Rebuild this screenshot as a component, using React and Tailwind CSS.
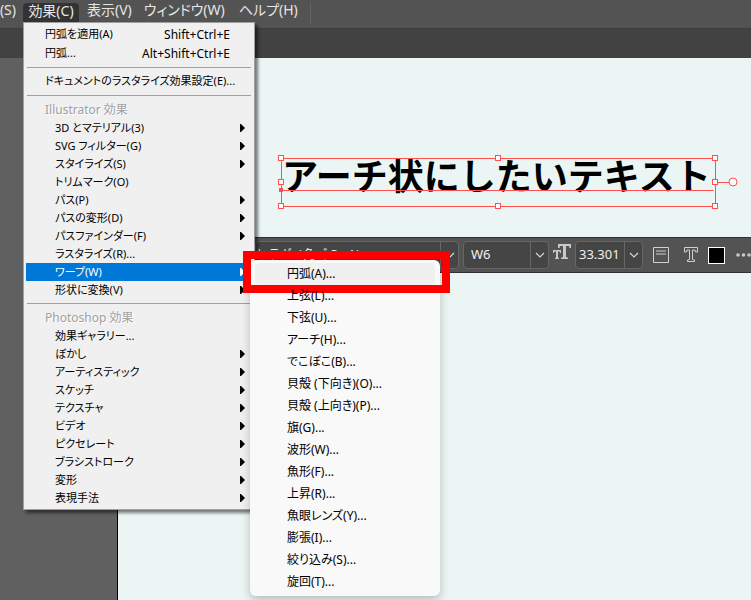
import React from "react";

const EFFECT_MENU = [
  { label: "円弧を適用(A)", shortcut: "Shift+Ctrl+E" },
  { label: "円弧...", shortcut: "Alt+Shift+Ctrl+E" },
  { separator: true },
  { label: "ドキュメントのラスタライズ効果設定(E)..." },
  { separator: true },
  { heading: "Illustrator 効果" },
  { label: "3D とマテリアル(3)", indent: true, arrow: true },
  { label: "SVG フィルター(G)", indent: true, arrow: true },
  { label: "スタイライズ(S)", indent: true, arrow: true },
  { label: "トリムマーク(O)", indent: true },
  { label: "パス(P)", indent: true, arrow: true },
  { label: "パスの変形(D)", indent: true, arrow: true },
  { label: "パスファインダー(F)", indent: true, arrow: true },
  { label: "ラスタライズ(R)...", indent: true },
  { label: "ワープ(W)", indent: true, arrow: true, active: true },
  { label: "形状に変換(V)", indent: true, arrow: true },
  { separator: true },
  { heading: "Photoshop 効果" },
  { label: "効果ギャラリー...", indent: true },
  { label: "ぼかし", indent: true, arrow: true },
  { label: "アーティスティック", indent: true, arrow: true },
  { label: "スケッチ", indent: true, arrow: true },
  { label: "テクスチャ", indent: true, arrow: true },
  { label: "ビデオ", indent: true, arrow: true },
  { label: "ピクセレート", indent: true, arrow: true },
  { label: "ブラシストローク", indent: true, arrow: true },
  { label: "変形", indent: true, arrow: true },
  { label: "表現手法", indent: true, arrow: true },
];

const WARP_MENU = [
  "円弧(A)...",
  "上弦(L)...",
  "下弦(U)...",
  "アーチ(H)...",
  "でこぼこ(B)...",
  "貝殻 (下向き)(O)...",
  "貝殻 (上向き)(P)...",
  "旗(G)...",
  "波形(W)...",
  "魚形(F)...",
  "上昇(R)...",
  "魚眼レンズ(Y)...",
  "膨張(I)...",
  "絞り込み(S)...",
  "旋回(T)...",
];

const Chevron = () => (
  <svg width="10" height="6" viewBox="0 0 10 6" fill="none" stroke="#d6d6d6" strokeWidth="1.2">
    <path d="M1 1l4 4 4-4" />
  </svg>
);

const MenuRow = ({ item }) => {
  if (item.separator) {
    return (
      <li role="separator" className="flex h-[9px] items-center px-[3px]">
        <span className="h-px w-full bg-[#a0a0a0]" />
      </li>
    );
  }
  if (item.heading) {
    return (
      <li className="flex h-[19px] items-center pl-[21px] text-xs text-[#a0a0a0] [text-shadow:1px_1px_0_#fff]">
        {item.heading}
      </li>
    );
  }
  return (
    <li className="px-[2px]">
      <button
        type="button"
        className={`flex w-full items-center justify-between pr-[7px] whitespace-nowrap ${
          item.indent ? "h-[18px] pl-[29px]" : "h-[19px] pl-[19px]"
        } ${item.active ? "bg-[#0078d7] text-white" : "text-black"}`}
      >
        <span>{item.label}</span>
        {item.shortcut && <span className="pr-[15px] text-xs">{item.shortcut}</span>}
        {item.arrow && (
          <svg width="5" height="8" viewBox="0 0 5 8" fill="currentColor">
            <path d="M0 0h1l4 4-4 4H0z" />
          </svg>
        )}
      </button>
    </li>
  );
};

const EffectMenu = () => (
  <ul className="absolute top-[22px] left-[23px] z-10 w-[232px] border border-[#a0a0a0] bg-[#f0f0f0] pt-[2px] pb-[2px] text-[11px] shadow-[3px_3px_3px_rgba(0,0,0,0.5)] [font-feature-settings:'palt']">
    {EFFECT_MENU.map((item, index) => (
      <MenuRow key={index} item={item} />
    ))}
  </ul>
);

const WarpMenu = () => (
  <ul className="absolute top-[260px] left-[250px] z-20 w-[190px] rounded-md bg-[#f9f9f9] px-[5px] pt-[3px] pb-[3px] text-xs shadow-[0_4px_10px_rgba(0,0,0,0.22)] [font-feature-settings:'palt']">
    {WARP_MENU.map((label, index) => (
      <li key={label} className="relative">
        <button
          type="button"
          className={`flex h-[22px] w-full items-center rounded pl-8 whitespace-nowrap text-black ${
            index === 0 ? "bg-[#f0f0f0]" : ""
          }`}
        >
          {label}
        </button>
        {/* Highlight frame around the chosen warp */}
        {index === 0 && (
          <span className="pointer-events-none absolute -top-3 -right-[15px] -bottom-2 -left-3 border-8 border-[#ff0000]" />
        )}
      </li>
    ))}
  </ul>
);

const MenuBar = () => (
  <nav className="flex h-[29px] items-start border-b border-[#3c3c3c] bg-[#535353] text-sm text-[#e6e6e6] [font-feature-settings:'palt']">
    <button type="button" className="flex h-5 w-[23px] items-center justify-end pr-[7px]">(S)</button>
    <button type="button" className="mt-[3px] flex h-[19px] w-14 items-center justify-center rounded-t bg-[#333333] pb-1 whitespace-nowrap">
      効果(C)
    </button>
    <button type="button" className="ml-2 flex h-5 items-center whitespace-nowrap">表示(V)</button>
    <button type="button" className="ml-3 flex h-5 items-center whitespace-nowrap">ウィンドウ(W)</button>
    <button type="button" className="ml-[14px] flex h-5 items-center whitespace-nowrap">ヘルプ(H)</button>
    <span className="mt-[3px] ml-3 h-5 w-px bg-[#666666]" />
  </nav>
);

const Handle = ({ x, y }) => (
  <rect x={x - 2.5} y={y - 2.5} width="5" height="5" fill="#fff" stroke="#ff4f4f" />
);

const SelectedText = () => (
  <div className="relative ml-[163px] h-12 w-[435px]">
    <p className="pl-px text-4xl leading-[38px] font-bold whitespace-nowrap text-black">アーチ状にしたいテキスト</p>
    <svg className="absolute top-0 left-0 overflow-visible" width="435" height="48" fill="none" stroke="#ff4f4f">
      <path d="M.5.5h434v48H.5zM.5 32.5h432M434 24.5h15" />
      <Handle x={0} y={0} />
      <Handle x={217} y={0} />
      <Handle x={434} y={0} />
      <Handle x={0} y={24} />
      <Handle x={434} y={24} />
      <Handle x={0} y={48} />
      <Handle x={217} y={48} />
      <Handle x={434} y={48} />
      <rect x="-1.5" y="30.5" width="3" height="3" fill="#ff4f4f" />
      <circle cx="452" cy="24" r="4" fill="#fff" />
    </svg>
  </div>
);

const Field = ({ label, value, className, inputClassName = "pl-[7px]" }) => (
  <div className={`flex h-7 shrink-0 rounded-sm border border-[#666666] bg-[#454545] ${className}`}>
    <input aria-label={label} defaultValue={value} className={`min-w-0 flex-1 outline-none ${inputClassName}`} />
    <button type="button" aria-label={`${label}一覧`} className="flex w-[18px] items-center justify-center border-l border-[#666666]">
      <Chevron />
    </button>
  </div>
);

const TypeBar = () => (
  <div className="mt-[31px] flex h-9 items-center overflow-hidden border-y border-[#303030] bg-[#535353] pl-[137px] text-[13px] text-[#f0f0f0]">
    <Field label="フォント" value="ヒラギノ角ゴ ProN" className="w-[204px]" inputClassName="pl-0 text-xs" />
    <Field label="スタイル" value="W6" className="ml-1 w-[86px]" />
    <svg className="mb-[6px] ml-1 shrink-0" width="18" height="16" viewBox="0 0 18 16" fill="#c8c8c8">
      <path d="M5 0h13v4h-1.500l-.5-2h-3v11l2 .7V15H8v-1.300l2-.7V2H7l-.5 2H5z" />
      <path d="M0 6h8v3H7l-.4-1.500H5V13.500l1 .5v1H2v-1l1-.5V7.500H1.400L1 9H0z" />
    </svg>
    <Field label="サイズ" value="33.301" className="ml-1 w-[68px]" inputClassName="pl-[3px]" />
    <button type="button" aria-label="段落" className="ml-[10px] shrink-0">
      <svg width="17" height="17" fill="none" stroke="#d0d0d0">
        <path d="M.5.5h15v15H.5zM3 4h10M3 7h10" />
      </svg>
    </button>
    <button type="button" aria-label="アウトライン" className="ml-[14px] shrink-0">
      <svg width="14" height="16" fill="none" stroke="#d0d0d0">
        <path d="M.5.5h13v4.500h-2l-.5-2H8.500v9.500l2 .5v1.500h-7V13l2-.5V3H3l-.5 2h-2z" />
      </svg>
    </button>
    <button type="button" aria-label="塗り" className="ml-[10px] size-[17px] shrink-0 border border-white bg-black" />
    <button type="button" aria-label="その他" className="ml-[11px] shrink-0">
      <svg width="16" height="4" fill="#c8c8c8">
        <circle cx="2" cy="2" r="1.8" />
        <circle cx="7.500" cy="2" r="1.8" />
        <circle cx="13" cy="2" r="1.8" />
      </svg>
    </button>
  </div>
);

export default function App() {
  return (
    <div className="relative flex min-h-screen flex-col overflow-hidden font-['Noto_Sans','Noto_Sans_CJK_JP',sans-serif]">
      <MenuBar />
      <div className="h-[29px] bg-[#424242]" />
      <main className="flex flex-1">
        <aside className="w-[118px] shrink-0 border-r border-black bg-[#606060]" />
        <section className="min-w-0 flex-1 bg-[#ebf5f4] pt-[100px]">
          <SelectedText />
          <TypeBar />
        </section>
      </main>
      <EffectMenu />
      <WarpMenu />
    </div>
  );
}
